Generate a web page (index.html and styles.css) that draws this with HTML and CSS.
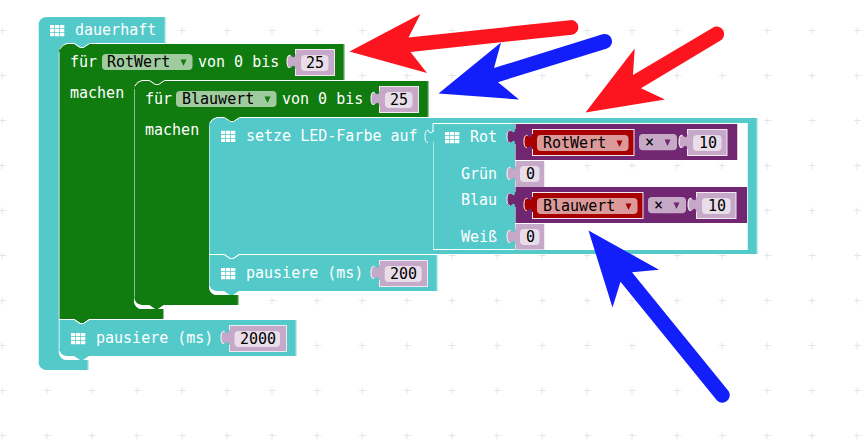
FILE: index.html
```html
<!DOCTYPE html>
<html lang="de">
<head>
<meta charset="utf-8">
<title>dauerhaft</title>
<link rel="stylesheet" href="styles.css">
</head>
<body>
<svg class="workspace" width="863" height="440" viewBox="0 0 863 440">
  <defs>
    <pattern id="grid" x="-20.5" y="8" width="45" height="45" patternUnits="userSpaceOnUse">
      <path class="grid-mark" d="M19.5 22.5h7M22.5 19.5v7"/>
    </pattern>
    <g id="icon">
      <path class="icon" d="M0 0h4.300v3.300H0zM5 0h4.300v3.300H5zM10 0h4.300v3.300H10zM0 4h4.300v3.300H0zM5 4h4.300v3.300H5zM10 4h4.300v3.300H10zM0 8h4.300v3.300H0zM5 8h4.300v3.300H5zM10 8h4.300v3.300H10z"/>
    </g>
    <path id="caret" d="M-3 0H3L0 6.4z"/>
    <path id="tab" d="M1 5H0c0 10-8-8-8 7.5s8-2.500 8 7.500H1z"/>
    <path id="tab-light" class="light" d="M-4.500 6.300C-7 6-8 8.500-8 12.500S-7 18.800-5 18.500"/>
  </defs>

  <rect width="863" height="440" fill="url(#grid)"/>

  <!-- dauerhaft -->
  <path class="teal" d="M38.500 25a8 8 0 0 1 8-8H165.500V44H89l-6 4h-3l-6-4h-7a8 8 0 0 0-8 8V352a8 8 0 0 0 8 8H88.500V370H46.500a8 8 0 0 1-8-8z"/>
  <path class="gap" d="M59 346V352a8 8 0 0 0 8 8H88.500V356H67a8 8 0 0 1-8-8z"/>
  <path class="edge" d="M38.500 362V25M165 17V43M88 360V370M59 52V353"/>
  <use href="#icon" x="50" y="25"/>
  <text class="label" x="75" y="35">dauerhaft</text>

  <!-- outer loop -->
  <path class="green" d="M59 52a8 8 0 0 1 8-8h7l6 4h3l6-4H344.500V81H164l-6 4h-3l-6-4h-7a8 8 0 0 0-8 8V301a8 8 0 0 0 8 8H164V319H89l-6 4h-3l-6-4H59z"/>
  <path class="edge" d="M59.500 319V52M344 44V80M163.500 309V319M134.500 88V302"/>
  <path class="light" d="M60 49Q62 44.500 67 43.500h7.500l6 4h3l6-4H165"/>
  <text class="label" x="70" y="67">für</text>
  <rect class="field-green" x="102" y="54" width="90.500" height="16" rx="4"/>
  <text class="value" x="107" y="67">RotWert</text>
  <use class="green" href="#caret" x="183.500" y="59.500"/>
  <text class="label" x="198" y="67">von 0 bis</text>
  <text class="label" x="70" y="98">machen</text>
  <g transform="translate(295 49)">
    <rect class="mauve outlined" x=".5" y=".5" width="39" height="26"/>
    <use class="mauve" href="#tab"/><use href="#tab-light"/>
    <rect class="field-number" x="6" y="6" width="27.500" height="16" rx="4"/>
    <text class="value" x="11" y="19">25</text>
  </g>

  <!-- inner loop -->
  <path class="green" d="M134 89a8 8 0 0 1 8-8h7l6 4h3l6-4H428.700V118H239l-6 4h-3l-6-4h-7a8 8 0 0 0-8 8V287a8 8 0 0 0 8 8H238.700V305H164l-6 4h-3l-6-4H142a8 8 0 0 1-8-8z"/>
  <path class="gap" d="M134 295V301a8 8 0 0 0 8 8H155l-6-4H142a8 8 0 0 1-8-8zM158 309l6-4V309z"/>
  <path class="edge" d="M134.500 297V89M428.200 81V117M238.200 295V305M209.500 126V288"/>
  <path class="light" d="M135 86Q137 81.500 142 80.500h7.500l6 4h3l6-4H345"/>
  <text class="label" x="145" y="104">für</text>
  <rect class="field-green" x="176" y="91" width="100.500" height="16" rx="4"/>
  <text class="value" x="182" y="104">Blauwert</text>
  <use class="green" href="#caret" x="267.500" y="96.500"/>
  <text class="label" x="282" y="104">von 0 bis</text>
  <text class="label" x="145" y="135">machen</text>
  <g transform="translate(379 86)">
    <rect class="mauve outlined" x=".5" y=".5" width="39" height="26"/>
    <use class="mauve" href="#tab"/><use href="#tab-light"/>
    <rect class="field-number" x="6" y="6" width="27.500" height="16" rx="4"/>
    <text class="value" x="11" y="19">25</text>
  </g>

  <!-- setze LED-Farbe auf -->
  <path class="teal" fill-rule="evenodd" d="M209 126a8 8 0 0 1 8-8h7l6 4h3l6-4H757.500V254H239l-6 4h-3l-6-4H209zM515 123V250H747.500V123z"/>
  <path class="edge" d="M209.500 254V126M757 118V254M433.500 142V249M747.500 123V250"/>
  <path class="light" d="M210 123Q212 118.500 217 117.500h7.500l6 4h3l6-4H429M433 132V123.500H747.500M433 249.500H747.500"/>
  <g transform="translate(433 124)">
    <use href="#tab-light"/>
    <path class="light" d="M-4.500 6.300L-3.500 8.500Q-1 10 0 6.500"/>
  </g>
  <use href="#icon" x="221" y="130.700"/>
  <text class="label" x="246" y="141">setze LED-Farbe auf</text>
  <use href="#icon" x="445" y="132"/>
  <text class="label" x="470" y="142">Rot</text>
  <text class="label" x="461" y="179">Grün</text>
  <text class="label" x="461" y="205">Blau</text>
  <text class="label" x="461" y="242">Weiß</text>

  <!-- Rot -->
  <g transform="translate(515 124)">
    <rect class="purple" width="222.500" height="36"/>
    <path class="edge" d="M.5 0V8M.5 18V36M222.500 0V36"/>
    <use class="purple" href="#tab"/><use href="#tab-light"/>
    <g transform="translate(17 5)">
      <rect class="red outlined" x=".5" y=".5" width="101.500" height="26"/>
      <use class="red" href="#tab"/><use href="#tab-light"/>
      <rect class="field-red" x="5" y="6" width="91.500" height="16" rx="4"/>
      <text class="value" x="11" y="19">RotWert</text>
      <use class="red" href="#caret" x="87.500" y="11.500"/>
    </g>
    <rect class="field-purple" x="124" y="10" width="38" height="16.300" rx="4"/>
    <text class="value" x="130" y="23">×</text>
    <use class="purple" href="#caret" x="152.500" y="15.500"/>
    <g transform="translate(172 5)">
      <rect class="mauve outlined" x=".5" y=".5" width="39.500" height="26"/>
      <use class="mauve" href="#tab"/><use href="#tab-light"/>
      <rect class="field-number" x="6" y="6" width="28.500" height="16" rx="4"/>
      <text class="value" x="12" y="19">10</text>
    </g>
  </g>

  <!-- Grün -->
  <g transform="translate(515 161)">
    <rect class="mauve" width="29.500" height="26"/>
    <path class="edge" d="M.5 0V8M.5 18V26M29.500 0V26"/>
    <use class="mauve" href="#tab"/><use href="#tab-light"/>
    <rect class="field-number" x="5" y="5" width="19.500" height="16" rx="4"/>
    <text class="value" x="11" y="18">0</text>
  </g>

  <!-- Blau -->
  <g transform="translate(515 187)">
    <rect class="purple" width="232" height="36"/>
    <path class="edge" d="M.5 0V8M.5 18V36"/>
    <use class="purple" href="#tab"/><use href="#tab-light"/>
    <g transform="translate(17 5)">
      <rect class="red outlined" x=".5" y=".5" width="110.500" height="26"/>
      <use class="red" href="#tab"/><use href="#tab-light"/>
      <rect class="field-red" x="5" y="6" width="100.500" height="16" rx="4"/>
      <text class="value" x="11" y="19">Blauwert</text>
      <use class="red" href="#caret" x="96.500" y="11.500"/>
    </g>
    <rect class="field-purple" x="133" y="10" width="38" height="16.300" rx="4"/>
    <text class="value" x="139" y="23">×</text>
    <use class="purple" href="#caret" x="161.500" y="15.500"/>
    <g transform="translate(181 5)">
      <rect class="mauve outlined" x=".5" y=".5" width="39.500" height="26"/>
      <use class="mauve" href="#tab"/><use href="#tab-light"/>
      <rect class="field-number" x="6" y="6" width="28.500" height="16" rx="4"/>
      <text class="value" x="12" y="19">10</text>
    </g>
  </g>

  <!-- Weiß -->
  <g transform="translate(515 224)">
    <rect class="mauve" width="29.500" height="25.500"/>
    <path class="edge" d="M.5 0V8M.5 18V25M29.500 0V25"/>
    <use class="mauve" href="#tab"/><use href="#tab-light"/>
    <rect class="field-number" x="5" y="5" width="19.500" height="16" rx="4"/>
    <text class="value" x="11" y="18">0</text>
  </g>

  <!-- pausiere 200 -->
  <path class="gap" d="M209 280V287a8 8 0 0 0 8 8H238.700V291H217a8 8 0 0 1-8-8z"/>
  <path class="teal" d="M209 255h15l6 4h3l6-4H437.500V291H239l-6 4h-3l-6-4H217a8 8 0 0 1-8-8z"/>
  <path class="edge" d="M209.500 284V255M437 255V291"/>
  <path class="light" d="M209.500 254.500h15l6 4h3l6-4H437"/>
  <use href="#icon" x="221" y="268"/>
  <text class="label" x="246" y="278">pausiere (ms)</text>
  <g transform="translate(379 260)">
    <rect class="mauve outlined" x=".5" y=".5" width="48" height="26"/>
    <use class="mauve" href="#tab"/><use href="#tab-light"/>
    <rect class="field-number" x="5.700" y="6" width="37" height="16" rx="4"/>
    <text class="value" x="11" y="19">200</text>
  </g>

  <!-- pausiere 2000 -->
  <path class="teal" d="M59 320h15l6 4h3l6-4H296.500V356H89l-6 4h-3l-6-4H67a8 8 0 0 1-8-8z"/>
  <path class="green" d="M74 319h15l-6 4h-3z"/>
  <path class="edge" d="M59.500 349V320M296 320V356"/>
  <path class="light" d="M59.500 319.500h15l6 4h3l6-4H164"/>
  <use href="#icon" x="71" y="333"/>
  <text class="label" x="96" y="343">pausiere (ms)</text>
  <g transform="translate(229 325)">
    <rect class="mauve outlined" x=".5" y=".5" width="57" height="26"/>
    <use class="mauve" href="#tab"/><use href="#tab-light"/>
    <rect class="field-number" x="5.500" y="6" width="45.500" height="16" rx="4"/>
    <text class="value" x="11" y="19">2000</text>
  </g>

  <!-- arrows -->
  <path class="arrow-red" d="M349.500 51.500L420.500 14L408.500 37.500L570 20.200A7.300 7.300 0 0 1 572 34.700L410.500 52L427 73z"/>
  <path class="arrow-blue" d="M438.500 93.500L501 42.500L494 68L602.500 34.200A7.500 7.500 0 0 1 607 48.500L498 82.200L519 99.500z"/>
  <path class="arrow-red" d="M585.500 112.500L634.700 48.500L633 75L712.800 27.700A7.500 7.500 0 0 1 720.500 40.600L641 88.300L665 99.500z"/>
  <path class="arrow-blue" d="M588.500 230.500L659 269.700L632 272.200L728.500 391A7.500 7.500 0 0 1 716.800 400.300L620.500 281.800L612.500 307.500z"/>
</svg>
</body>
</html>
```
FILE: styles.css
```css
body {
  margin: 0;
  background: #fff;
}

.workspace {
  display: block;
  background: #fff;
}

.grid-mark {
  fill: none;
  stroke: #e4e4e4;
  stroke-width: 1;
}

.label,
.value {
  font-family: "DejaVu Sans Mono", monospace;
  font-size: 15px;
}

.label {
  fill: #fff;
}

.value {
  fill: #000;
}

.icon,
.gap {
  fill: #fff;
}

.teal {
  fill: #54c9c9;
}

.green {
  fill: #107c10;
}

.purple {
  fill: #712672;
}

.red {
  fill: #a80000;
}

.mauve {
  fill: #c6a9c9;
}

.field-green {
  fill: #9fcb9f;
}

.field-red {
  fill: #dc9999;
}

.field-purple {
  fill: #c6a8c7;
}

.field-number {
  fill: #e8dde9;
}

.light {
  fill: none;
  stroke: #fff;
  stroke-width: 1;
}

.edge {
  fill: none;
  stroke: #fff;
  stroke-opacity: 0.5;
  stroke-width: 1;
}

.outlined {
  stroke: #f1e8f2;
  stroke-width: 1;
}

.arrow-red {
  fill: #fc141f;
}

.arrow-blue {
  fill: #131ffb;
}
```
